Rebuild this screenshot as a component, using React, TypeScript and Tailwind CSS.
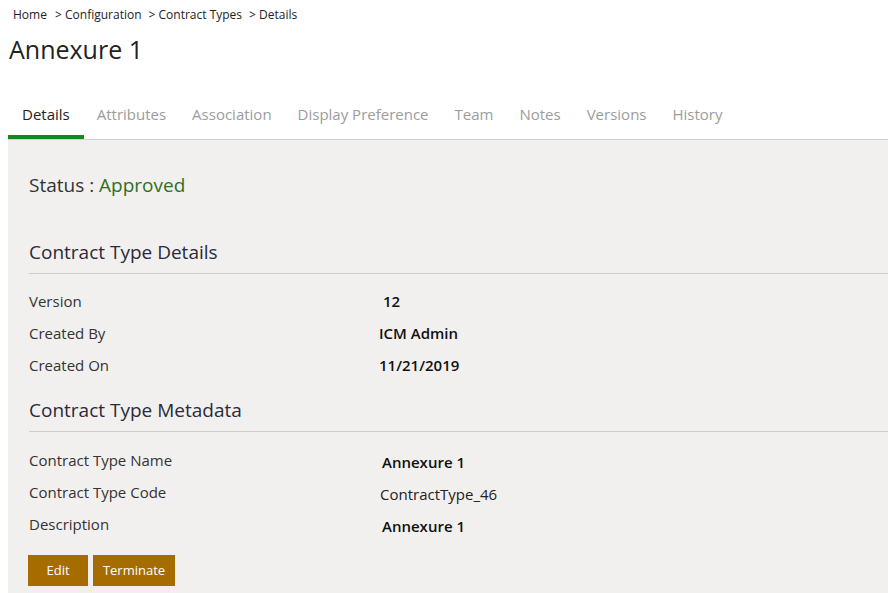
const tabs = [
  "Details",
  "Attributes",
  "Association",
  "Display Preference",
  "Team",
  "Notes",
  "Versions",
  "History",
];

const details = [
  { label: "Version", value: "12", offset: "pl-[4px]" },
  { label: "Created By", value: "ICM Admin", offset: "" },
  { label: "Created On", value: "11/21/2019", offset: "" },
];

const metadata = [
  { label: "Contract Type Name", value: "Annexure 1", bold: true },
  { label: "Contract Type Code", value: "ContractType_46", bold: false },
  { label: "Description", value: "Annexure 1", bold: true },
];

export default function App() {
  return (
    <div
      className="h-[593px] w-[888px] overflow-hidden bg-white text-[#222]"
      style={{ fontFamily: '"Open Sans", "Noto Sans", sans-serif' }}
    >
      <div className="pl-[13px] pt-[6px] text-[12px] leading-[18px] text-[#222]">
        Home <span className="ml-[5px]">&gt; Configuration</span>
        <span className="ml-[7px]">&gt; Contract Types</span>
        <span className="ml-[7px]">&gt; Details</span>
      </div>
      <h1 className="mt-[8px] pl-[9px] text-[25px] leading-[34px] text-[#222]">Annexure 1</h1>

      <div className="ml-[8px] mt-[37px] flex border-b border-[#cfcfcf]">
        {tabs.map((t, i) => (
          <div
            key={t}
            className={
              i === 0
                ? "border-b-4 border-[#12881f] px-[14px] pb-[9px] text-[15px] leading-[23px] text-[#222]"
                : "border-b-4 border-transparent px-[13px] pb-[9px] text-[15px] leading-[23px] text-[#9c9c9c]"
            }
          >
            {t}
          </div>
        ))}
      </div>

      <div className="ml-[8px] h-[460px] bg-[#f2f0ef] pl-[21px] pt-[32px]">
        <div className="text-[19px] leading-[26px] text-[#333]">
          Status : <span className="text-[#2f6f1f]">Approved</span>
        </div>

        <div className="mt-[41px] border-b border-[#cdcdcd] pb-[8px] text-[19px] leading-[26px] text-[#2a2a3a]">
          Contract Type Details
        </div>
        <div className="pt-[17px]">
          {details.map((r) => (
            <div key={r.label} className="flex h-[32px] items-start text-[15px] leading-[21px]">
              <div className="w-[350px] text-[#333]">{r.label}</div>
              <div className={"font-semibold text-[#111] " + r.offset}>{r.value}</div>
            </div>
          ))}
        </div>

        <div className="mt-[10px] border-b border-[#cdcdcd] pb-[8px] text-[19px] leading-[26px] text-[#2a2a3a]">
          Contract Type Metadata
        </div>
        <div className="pt-[18px]">
          {metadata.map((r) => (
            <div key={r.label} className="flex h-[32px] items-start text-[15px] leading-[21px]">
              <div className="w-[350px] text-[#333]">{r.label}</div>
              <div
                className={
                  r.bold
                    ? "pl-[3px] pt-[2px] font-semibold text-[#111]"
                    : "pl-[1px] pt-[2px] text-[#222]"
                }
              >
                {r.value}
              </div>
            </div>
          ))}
        </div>

        <div className="ml-[-1px] mt-[9px] flex gap-[5px]">
          <button className="h-[31px] w-[60px] bg-[#a66c00] text-[13px] text-white">Edit</button>
          <button className="h-[31px] w-[82px] bg-[#a66c00] text-[13px] text-white">Terminate</button>
        </div>
      </div>
    </div>
  );
}
